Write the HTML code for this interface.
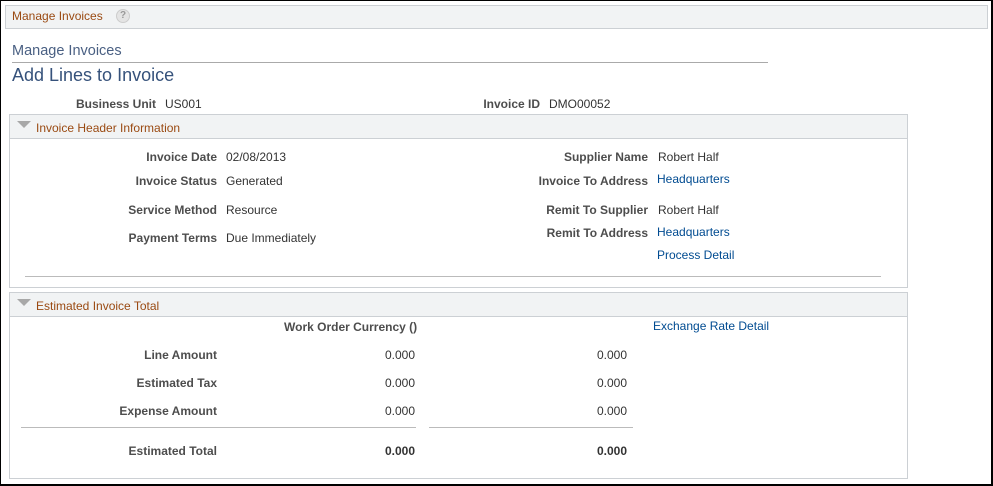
<!DOCTYPE html><html><head><style>
body{margin:0;width:993px;height:486px;position:relative;overflow:hidden;font-family:"Liberation Sans",Arial,sans-serif;font-size:12px;color:#333;background:#fff}
.a{position:absolute;white-space:nowrap;line-height:14px;margin-top:1px}
.l{font-weight:bold;color:#4d4d4d;text-align:right}
.r{text-align:right}
.k{color:#004b91}
.b{position:absolute;border:1px solid #ccd0d4;box-sizing:border-box}
.h{position:absolute;background:#f1f3f4;border-bottom:1px solid #ccd0d4;box-sizing:border-box}
.t{color:#9a4a12;font-size:12px}
.tri{position:absolute;width:0;height:0;border-left:7px solid transparent;border-right:7px solid transparent;border-top:7px solid #a8a8a8}
.hl{position:absolute;height:1px;background:#bbb}
</style></head><body>
<div style="position:absolute;left:0;top:0;width:993px;height:486px;border:1px solid #000;border-bottom-width:2px;border-right-width:2px;box-sizing:border-box"></div>
<div class="b" style="left:5px;top:5px;width:983px;height:24px;background:#f1f3f4"></div>
<div class="a t" style="left:12px;top:8px">Manage Invoices</div>
<div style="position:absolute;left:116px;top:9px;width:14px;height:14px;border-radius:50%;border:1px solid #ccc;background:#e4e4e4;box-sizing:border-box;color:#999;font-size:10px;font-weight:bold;text-align:center;line-height:12px">?</div>
<div class="a" style="left:12px;top:42px;font-size:14.5px;line-height:16px;color:#4a6083">Manage Invoices</div>
<div class="hl" style="left:12px;top:62px;width:756px;background:#aaa"></div>
<div class="a" style="left:12px;top:64px;font-size:18px;line-height:21px;color:#36527b">Add Lines to Invoice</div>
<div class="a l" style="left:0;width:156px;top:96px">Business Unit</div><div class="a" style="left:165px;top:96px">US001</div>
<div class="a l" style="left:400px;width:140px;top:96px">Invoice ID</div><div class="a" style="left:549px;top:96px">DMO00052</div>

<div class="b" style="left:9px;top:114px;width:899px;height:174px"></div>
<div class="h" style="left:10px;top:115px;width:897px;height:24px"></div>
<div class="tri" style="left:17px;top:121px"></div>
<div class="a t" style="left:36px;top:120px">Invoice Header Information</div>
<div class="a l" style="left:0;width:217px;top:149px">Invoice Date</div><div class="a" style="left:226px;top:149px">02/08/2013</div>
<div class="a l" style="left:0;width:217px;top:173px">Invoice Status</div><div class="a" style="left:226px;top:173px">Generated</div>
<div class="a l" style="left:0;width:217px;top:202px">Service Method</div><div class="a" style="left:226px;top:202px">Resource</div>
<div class="a l" style="left:0;width:217px;top:230px">Payment Terms</div><div class="a" style="left:226px;top:230px">Due Immediately</div>
<div class="a l" style="left:400px;width:248px;top:149px">Supplier Name</div><div class="a" style="left:658px;top:149px">Robert Half</div>
<div class="a l" style="left:400px;width:248px;top:173px">Invoice To Address</div><div class="a k" style="left:657px;top:171px">Headquarters</div>
<div class="a l" style="left:400px;width:248px;top:202px">Remit To Supplier</div><div class="a" style="left:658px;top:202px">Robert Half</div>
<div class="a l" style="left:400px;width:248px;top:225px">Remit To Address</div><div class="a k" style="left:657px;top:224px">Headquarters</div>
<div class="a k" style="left:657px;top:247px">Process Detail</div>
<div class="hl" style="left:25px;top:276px;width:856px"></div>

<div class="b" style="left:9px;top:292px;width:899px;height:187px"></div>
<div class="h" style="left:10px;top:293px;width:897px;height:24px"></div>
<div class="tri" style="left:17px;top:299px"></div>
<div class="a t" style="left:36px;top:298px">Estimated Invoice Total</div>
<div class="a l" style="left:284px;top:319px;text-align:left">Work Order Currency ()</div>
<div class="a k" style="left:653px;top:318px">Exchange Rate Detail</div>
<div class="a l" style="left:0;width:217px;top:347px">Line Amount</div>
<div class="a l" style="left:0;width:217px;top:375px">Estimated Tax</div>
<div class="a l" style="left:0;width:217px;top:403px">Expense Amount</div>
<div class="a l" style="left:0;width:217px;top:443px">Estimated Total</div>
<div class="a r" style="left:315px;width:100px;top:347px">0.000</div><div class="a r" style="left:527px;width:100px;top:347px">0.000</div>
<div class="a r" style="left:315px;width:100px;top:375px">0.000</div><div class="a r" style="left:527px;width:100px;top:375px">0.000</div>
<div class="a r" style="left:315px;width:100px;top:403px">0.000</div><div class="a r" style="left:527px;width:100px;top:403px">0.000</div>
<div class="hl" style="left:21px;top:427px;width:395px"></div><div class="hl" style="left:429px;top:427px;width:204px"></div>
<div class="a r" style="left:315px;width:100px;top:443px;font-weight:bold">0.000</div><div class="a r" style="left:527px;width:100px;top:443px;font-weight:bold">0.000</div>
</body></html>
